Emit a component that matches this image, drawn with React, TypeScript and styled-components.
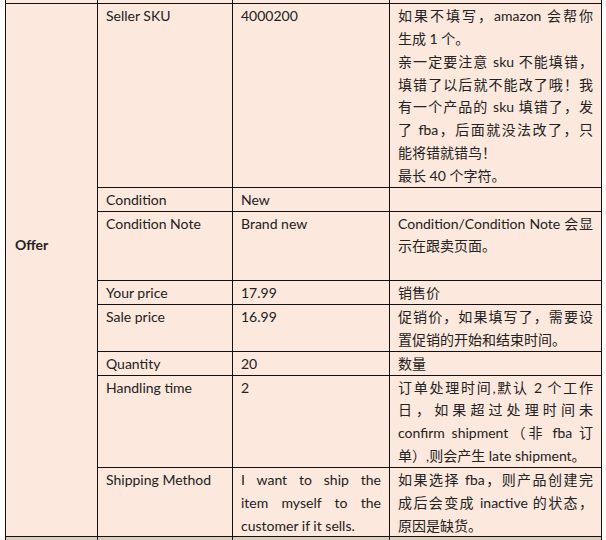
import React from 'react';
import styled, {createGlobalStyle} from 'styled-components';

const GlobalStyle = createGlobalStyle`
  html, body {
    margin: 0;
    padding: 0;
    background: #fff;
  }
`;

const Page = styled.div`
  height: 540px;
  overflow: hidden;
  padding: 0 5px;
`;

const Sheet = styled.table`
  width: 596px;
  border-collapse: collapse;
  table-layout: fixed;
  font-family: Lato, "Noto Sans CJK SC", sans-serif;
  color: #222;
`;

const LINE = 22.85;

const Cell = styled.td<{$lines?: number}>`
  border: 1px solid #111;
  background: #fce8dc;
  padding: 0 8px;
  vertical-align: top;
  font-size: 14px;
  line-height: ${LINE}px;
  height: ${props => (props.$lines ? `${props.$lines * LINE}px` : 'auto')};
`;

const GroupCell = styled(Cell)`
  vertical-align: middle;
  padding: 0 0 50px 9px;
  font-weight: bold;
`;

const EdgeCell = styled.td<{$bottom?: boolean}>`
  height: ${props => (props.$bottom ? '20px' : '3px')};
  padding: 0;
  border: 1px solid #111;
  border-top: ${props => (props.$bottom ? '1px solid #111' : '0')};
  background: ${props => (props.$bottom ? '#d9ccbd' : '#fce8dc')};
`;

const Line = styled.span<{$fill?: boolean}>`
  display: block;
  height: ${LINE}px;
  padding-top: 1px;
  box-sizing: border-box;
  text-align: ${props => (props.$fill ? 'justify' : 'left')};
  text-align-last: ${props => (props.$fill ? 'justify' : 'auto')};
`;

type Para = string[];

interface Row {
  label: string;
  value: Para[];
  note: Para[];
  lines?: number;
}

const rows: Row[] = [
  {
    label: 'Seller SKU',
    value: [['4000200']],
    note: [
      ['如果不填写，amazon 会帮你', '生成 1 个。'],
      [
        '亲一定要注意 sku 不能填错，',
        '填错了以后就不能改了哦！我',
        '有一个产品的 sku 填错了，发',
        '了 fba，后面就没法改了，只',
        '能将错就错鸟！',
      ],
      ['最长 40 个字符。'],
    ],
  },
  {label: 'Condition', value: [['New']], note: []},
  {
    label: 'Condition Note',
    value: [['Brand new']],
    note: [['Condition/Condition Note 会显', '示在跟卖页面。']],
    lines: 3,
  },
  {label: 'Your price', value: [['17.99']], note: [['销售价']]},
  {
    label: 'Sale price',
    value: [['16.99']],
    note: [['促销价，如果填写了，需要设', '置促销的开始和结束时间。']],
  },
  {label: 'Quantity', value: [['20']], note: [['数量']]},
  {
    label: 'Handling time',
    value: [['2']],
    note: [
      [
        '订单处理时间,默认 2 个工作',
        '日，如果超过处理时间未',
        'confirm shipment（非 fba 订',
        '单）,则会产生 late shipment。',
      ],
    ],
  },
  {
    label: 'Shipping Method',
    value: [['I want to ship the', 'item myself to the', 'customer if it sells.']],
    note: [['如果选择 fba，则产品创建完', '成后会变成 inactive 的状态，', '原因是缺货。']],
  },
];

const Paragraphs = ({paras}: {paras: Para[]}) => (
  <>
    {paras.map((para, i) =>
      para.map((text, j) => (
        <Line key={`${i}-${j}`} $fill={j < para.length - 1}>
          {text}
        </Line>
      )),
    )}
  </>
);

const App = () => {
  return (
    <Page>
      <GlobalStyle />
      <Sheet>
        <colgroup>
          <col style={{width: 92}} />
          <col style={{width: 135}} />
          <col style={{width: 157}} />
          <col style={{width: 212}} />
        </colgroup>
        <tbody>
          <tr>
            <EdgeCell />
            <EdgeCell />
            <EdgeCell />
            <EdgeCell />
          </tr>
          {rows.map((row, i) => (
            <tr key={row.label}>
              {i === 0 && <GroupCell rowSpan={rows.length}>Offer</GroupCell>}
              <Cell $lines={row.lines}>
                <Line>{row.label}</Line>
              </Cell>
              <Cell>
                <Paragraphs paras={row.value} />
              </Cell>
              <Cell>
                <Paragraphs paras={row.note} />
              </Cell>
            </tr>
          ))}
          <tr>
            <EdgeCell $bottom />
            <EdgeCell $bottom />
            <EdgeCell $bottom />
            <EdgeCell $bottom />
          </tr>
        </tbody>
      </Sheet>
    </Page>
  );
};

export default App;
